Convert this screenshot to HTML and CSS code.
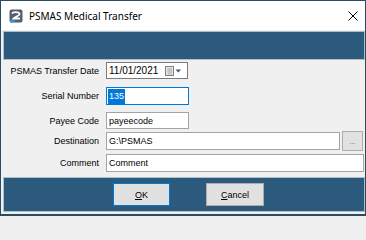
FILE: index.html
```html
<!DOCTYPE html>
<html>
<head>
<meta charset="utf-8">
<link rel="stylesheet" href="styles.css">
</head>
<body>
<div class="window">
  <div class="titlebar">
    <svg class="app-icon" width="14" height="14" viewBox="0 0 14 14">
      <rect x="0.5" y="0.5" width="13" height="13" rx="2" fill="#55606b"/>
      <path d="M3 4.5 C4 2.5 10 2.5 10.5 4.8 C11 7 6 7.5 4.5 9.5 L11 9.5" fill="none" stroke="#ffffff" stroke-width="1.8"/>
      <path d="M1 11 L6 11 L5 13.5 L1 13.5 Z" fill="#3d8fd6"/>
    </svg>
    <span class="title">PSMAS Medical Transfer</span>
    <svg class="close" width="10" height="10" viewBox="0 0 10 10">
      <path d="M0.5 0.5 L9.5 9.5 M9.5 0.5 L0.5 9.5" stroke="#000" stroke-width="1"/>
    </svg>
  </div>
  <div class="content">
    <div class="band band-top"></div>

    <div class="row row-date">
      <span class="lbl">PSMAS Transfer Date</span>
      <div class="field field-date">
        <span class="date-text">11/01/2021</span>
        <svg class="cal" width="17" height="10" viewBox="0 0 17 10">
          <rect x="0.5" y="0.5" width="8" height="9" fill="#e8e8e8" stroke="#808080"/>
          <path d="M2 3 H7 M2 5 H7 M2 7 H7 M4 2 V9 M6 2 V9" stroke="#b0b0b0" stroke-width="0.8"/>
          <path d="M10.5 3.5 L16 3.5 L13.25 6.5 Z" fill="#3b5a80"/>
        </svg>
      </div>
    </div>

    <div class="row row-serial">
      <span class="lbl">Serial Number</span>
      <div class="field field-focus field-short"><span class="sel">135</span></div>
    </div>

    <div class="row row-payee">
      <span class="lbl">Payee Code</span>
      <div class="field field-short">payeecode</div>
    </div>

    <div class="row row-dest">
      <span class="lbl">Destination</span>
      <div class="dest-wrap">
        <div class="field field-grow">G:\PSMAS</div>
        <div class="browse">...</div>
      </div>
    </div>

    <div class="row row-comment">
      <span class="lbl">Comment</span>
      <div class="field">Comment</div>
    </div>

    <div class="band band-bottom">
      <div class="btn btn-default"><u>O</u>K</div>
      <div class="btn btn-cancel"><u>C</u>ancel</div>
    </div>
  </div>
</div>
</body>
</html>
```

FILE: styles.css
```css
* { box-sizing: border-box; }
html, body { margin: 0; padding: 0; }
body { width: 366px; height: 216px; overflow: hidden; background: #f0f0f0; }

.window {
  width: 366px;
  height: 216px;
  border: 1px solid #2a4c63;
  border-bottom-width: 2px;
  display: flex;
  flex-direction: column;
  font-family: "Liberation Sans", Arial, sans-serif;
  font-size: 9px;
  color: #000;
}

.titlebar {
  height: 29px;
  flex: none;
  background: #fff;
  display: flex;
  align-items: center;
  padding-left: 8px;
  padding-right: 7px;
}
.app-icon { flex: none; margin-top: 1px; }
.title {
  font-family: "Noto Sans", "Open Sans", sans-serif;
  font-size: 10px;
  margin-left: 6px;
  flex: 1;
}
.close { flex: none; margin-top: 0px; }

.content {
  flex: 1;
  background: #f0f0f0;
  display: flex;
  flex-direction: column;
  padding-top: 1px;
}

.band {
  background: #2b5a7c;
  border: 1px solid #aebfcc;
  margin-left: 2px;
}
.band-top { height: 29px; }
.band-bottom {
  height: 35px;
  margin-top: 5px;
  display: flex;
  align-items: center;
  padding-left: 109px;
  gap: 36px;
}

.row {
  display: grid;
  grid-template-columns: 98px 1fr;
  column-gap: 7px;
  align-items: center;
  padding-right: 1px;
  height: 18px;
}
.row-date { margin-top: 2px; height: 17px; }
.row-serial { margin-top: 8px; }
.row-payee { margin-top: 7px; height: 17px; }
.row-dest { margin-top: 3px; }
.row-comment { margin-top: 4px; }

.lbl { text-align: right; white-space: nowrap; }

.field {
  height: 100%;
  background: #fff;
  border: 1px solid #a4a4a4;
  display: flex;
  align-items: center;
  padding-left: 2px;
  white-space: nowrap;
}
.field-short { width: 83px; }
.field-date {
  width: 82px;
  border-color: #7a7a7a;
  justify-content: space-between;
  padding-right: 5px;
}
.date-text { font-size: 10px; }
.field-focus { border-color: #0078d7; padding-left: 1px; }
.sel { background: #0078d7; color: #fff; padding: 2px 1px; line-height: 11px; }

.dest-wrap {
  display: flex;
  align-items: center;
  gap: 2px;
  height: 18px;
  margin-right: 1px;
}
.field-grow { flex: 1; }
.browse {
  flex: none;
  width: 21px;
  height: 20px;
  background: #e1e1e1;
  border: 1px solid #adadad;
  color: #6d6d6d;
  font-size: 8px;
  display: flex;
  justify-content: center;
  align-items: flex-end;
  padding-bottom: 4px;
  line-height: 1;
}

.btn {
  height: 23px;
  background: #e1e1e1;
  border: 1px solid #adadad;
  display: flex;
  align-items: center;
  justify-content: center;
  font-size: 9px;
}
.btn-default { width: 57px; border-color: #0078d7; }
.btn-cancel { width: 58px; }
```
